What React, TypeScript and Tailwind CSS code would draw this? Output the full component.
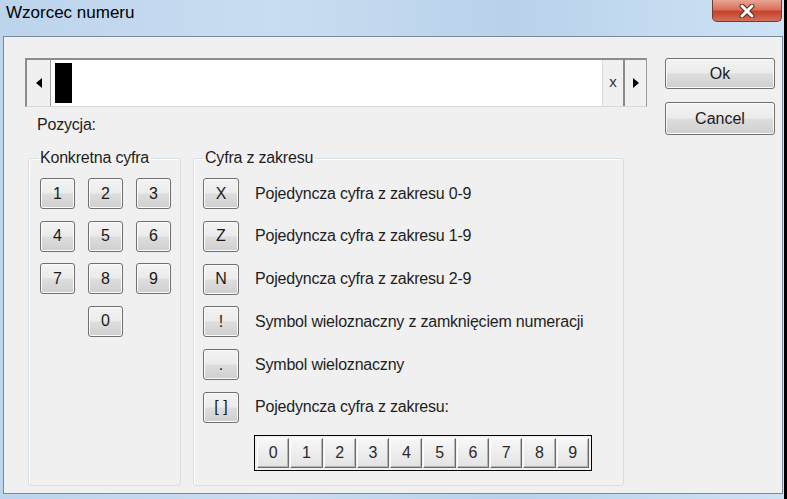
import type { ReactNode } from "react";

const btn =
  "flex items-center justify-center rounded-[3px] border border-[#707070] bg-[linear-gradient(#f3f3f3_0%,#ebebeb_48%,#dddddd_52%,#cfcfcf_100%)] shadow-[inset_0_0_0_1px_#fbfbfb] text-[16px] text-[#1a1a1a]";

function KeyButton({ children, w = "w-[35px]" }: { children: ReactNode; w?: string }) {
  return <div className={`${btn} ${w} h-[31px]`}>{children}</div>;
}

const rangeRows = [
  { key: "X", label: "Pojedyncza cyfra z zakresu 0-9" },
  { key: "Z", label: "Pojedyncza cyfra z zakresu 1-9" },
  { key: "N", label: "Pojedyncza cyfra z zakresu 2-9" },
  { key: "!", label: "Symbol wieloznaczny z zamknięciem numeracji" },
  { key: ".", label: "Symbol wieloznaczny" },
  { key: "[ ]", label: "Pojedyncza cyfra z zakresu:" },
];

export default function App() {
  return (
    <div className="w-[787px] h-[499px] bg-black overflow-hidden font-['Liberation_Sans',Arial,sans-serif] text-[#1e1e1e]">
      <div className="w-[784px] h-full flex flex-col bg-[linear-gradient(to_right,#bcd4ec,#c8ddf1_35%,#b9d2ea_65%,#cde2f5)]">
        {/* title bar */}
        <div className="h-[36px] flex items-start justify-between">
          <div className="pl-[6px] pt-[3px] text-[17px] text-black leading-[20px]">Wzorcec numeru</div>
          <div className="mr-[2px] w-[70px] h-[22px] rounded-b-[5px] border border-t-0 border-[#6f3a32] bg-[linear-gradient(#e9a593_0%,#d9715a_45%,#c7422b_55%,#d4705a_100%)] flex items-center justify-center">
            <svg width="18" height="14" viewBox="0 0 18 14">
              <path d="M4 2 L14 12 M14 2 L4 12" stroke="#5a2a22" strokeWidth="5" strokeLinecap="round" />
              <path d="M4 2 L14 12 M14 2 L4 12" stroke="#ffffff" strokeWidth="3" strokeLinecap="round" />
            </svg>
          </div>
        </div>

        {/* client area */}
        <div className="ml-[3px] w-[780px] h-[458px] border border-[#7a8a9c] bg-[#f0f0f0] flex">
          <div className="ml-[21px] mt-[21px] flex flex-col">
            {/* pattern field */}
            <div className="w-[622px] h-[49px] flex border border-t-2 border-l-2 border-[#8c8c8c] border-b-[#d8d8d8] border-r-[#9a9a9a] bg-white">
              <div className="w-[24px] bg-[#f0f0f0] border-r border-[#a0a0a0] flex items-center justify-center">
                <svg width="6" height="10" viewBox="0 0 6 10">
                  <path d="M6 0 L0 5 L6 10 Z" fill="#000" />
                </svg>
              </div>
              <div className="flex-1 pt-[3px] pl-[4px]">
                <div className="w-[17px] h-[40px] bg-black" />
              </div>
              <div className="w-[21px] bg-[#f0f0f0] border-l border-[#dcdcdc] flex items-center justify-center text-[15px] text-[#333] pb-[1px]">
                x
              </div>
              <div className="w-[23px] bg-[#f0f0f0] border-l-2 border-[#8a8a8a] flex items-center justify-center">
                <svg width="6" height="10" viewBox="0 0 6 10">
                  <path d="M0 0 L6 5 L0 10 Z" fill="#000" />
                </svg>
              </div>
            </div>

            <div className="mt-[9px] ml-[12px] text-[16px] tracking-[-0.2px] leading-[18px]">Pozycja:</div>

            <div className="mt-[15px] ml-[3px] flex gap-[12px]">
              {/* specific digit */}
              <fieldset className="w-[153px] h-[337px] border border-[#d5dfe5] rounded-[3px] pl-[11px] pt-[11px] shadow-[inset_1px_1px_0_#ffffff]">
                <legend className="px-[2px] -ml-[2px] text-[16px] tracking-[-0.2px] leading-[18px]">Konkretna cyfra</legend>
                <div className="grid grid-cols-[35px_35px_35px] gap-x-[13px] gap-y-[11.5px]">
                  {["1", "2", "3", "4", "5", "6", "7", "8", "9"].map((d) => (
                    <KeyButton key={d}>{d}</KeyButton>
                  ))}
                  <div className="col-start-2">
                    <KeyButton>0</KeyButton>
                  </div>
                </div>
              </fieldset>

              {/* range digit */}
              <fieldset className="w-[431px] h-[337px] border border-[#d5dfe5] rounded-[3px] pl-[9px] pt-[11px] shadow-[inset_1px_1px_0_#ffffff]">
                <legend className="px-[2px] text-[16px] tracking-[-0.2px] leading-[18px]">Cyfra z zakresu</legend>
                <div className="flex flex-col gap-[11.8px]">
                  {rangeRows.map((r) => (
                    <div key={r.key} className="flex items-center gap-[16px]">
                      <KeyButton w="w-[36px]">{r.key}</KeyButton>
                      <span className="text-[16px] tracking-[-0.2px] leading-[18px]">{r.label}</span>
                    </div>
                  ))}
                </div>
                <div className="mt-[12px] ml-[51px] w-max flex gap-[1px] border border-black p-[2px] bg-[#f0f0f0]">
                  {["0", "1", "2", "3", "4", "5", "6", "7", "8", "9"].map((d) => (
                    <div
                      key={d}
                      className="w-[32.3px] h-[30px] flex items-center justify-center text-[16px] text-[#2a2a2a] bg-[linear-gradient(#f7f7f7,#e3e3e3)] border border-t-white border-l-white border-b-[#6b6b6b] border-r-[#6b6b6b] shadow-[inset_-1px_-1px_0_#b4b4b4]"
                    >
                      {d}
                    </div>
                  ))}
                </div>
              </fieldset>
            </div>
          </div>

          {/* dialog buttons */}
          <div className="ml-[18px] mt-[21px] flex flex-col gap-[13px]">
            <div className={`${btn} w-[110px] h-[31px] border-[#3c7fb1] shadow-[inset_0_0_0_1px_#bfe3f6]`}>Ok</div>
            <div className={`${btn} w-[110px] h-[33px]`}>Cancel</div>
          </div>
        </div>
      </div>
    </div>
  );
}
